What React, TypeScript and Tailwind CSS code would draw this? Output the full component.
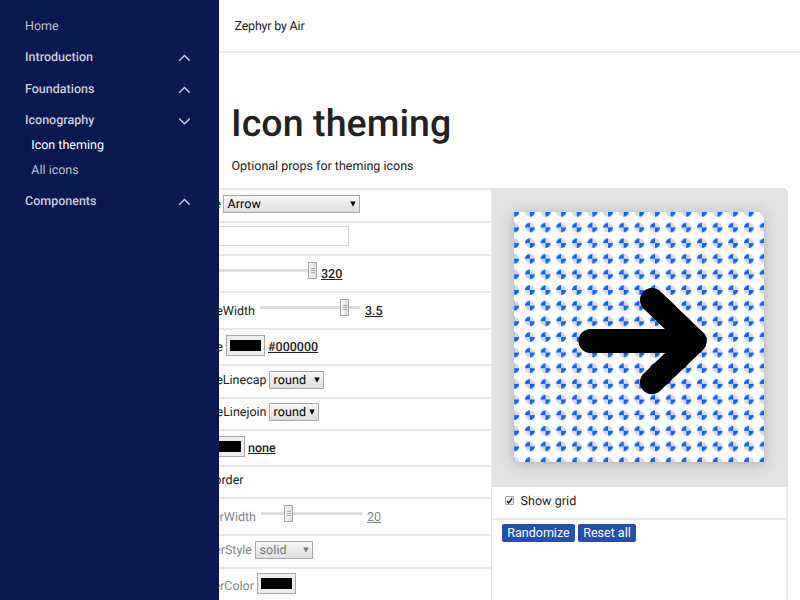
import React from 'react';

const CARET_UP = 'M1.2 7.8 L6.5 2.6 L11.8 7.8';
const CARET_DOWN = 'M1.2 2.6 L6.5 7.8 L11.8 2.6';

function Chevron({ open = false }: { open?: boolean }) {
  return (
    <svg width="13" height="10" viewBox="0 0 13 10" fill="none" stroke="#d2d3d8" strokeWidth="1.4">
      <path d={open ? CARET_DOWN : CARET_UP} />
    </svg>
  );
}

function Group({ label, open }: { label: string; open?: boolean }) {
  return (
    <div className="flex h-[31.25px] items-center justify-between pr-[28px] pl-[25px] font-medium text-[#c9cbd2]">
      <span>{label}</span>
      <Chevron open={open} />
    </div>
  );
}

function Row({ height, children, className = '' }: { height: string; children: React.ReactNode; className?: string }) {
  return (
    <div className={`flex shrink-0 items-center border-b-2 border-[#e8e8e8] ${height} ${className}`}>{children}</div>
  );
}

function Label({ width, children, className = '' }: { width: string; children?: React.ReactNode; className?: string }) {
  return (
    <div className={`flex shrink-0 justify-end overflow-hidden pt-[2px] ${width} ${className}`}>
      <span className="whitespace-nowrap">{children}</span>
    </div>
  );
}

function Select({ width, children, muted = false }: { width: string; children: string; muted?: boolean }) {
  return (
    <div
      className={`flex h-[18px] shrink-0 items-center justify-between border border-[#a9a9ab] bg-linear-to-b from-[#f6f6f6] to-[#dedede] pr-[3px] pl-[3.5px] ${width} ${muted ? 'text-[#777777]' : 'text-black'}`}
    >
      <span className="pt-[2px] tracking-[0.1px]">{children}</span>
      <svg width="6" height="6" viewBox="0 0 6 6" fill="currentColor">
        <path d="M0.3 0.5 H5.7 L3 5.8 Z" />
      </svg>
    </div>
  );
}

function Thumb() {
  return (
    <div className="flex h-[17px] w-[9px] shrink-0 flex-col items-center justify-center gap-px border border-[#a5a5a8] bg-linear-to-r from-[#fafafa] to-[#dddddd]">
      <i className="h-px w-[4px] bg-[#a8a8a8]" />
      <i className="h-px w-[4px] bg-[#a8a8a8]" />
      <i className="h-px w-[4px] bg-[#a8a8a8]" />
    </div>
  );
}

function Slider({ before, after }: { before: string; after: string }) {
  return (
    <div className="flex shrink-0 items-center">
      <div className={`h-[3px] bg-[#dddddd] ${before}`} />
      <Thumb />
      <div className={`h-[3px] bg-[#dddddd] ${after}`} />
    </div>
  );
}

function Swatch() {
  return (
    <div className="flex h-[21px] w-[39px] shrink-0 justify-end border border-[#a9a9ab] bg-[#eeeeee] px-[3px] py-[4px]">
      <div className="h-[11px] w-[31px] bg-black" />
    </div>
  );
}

function Value({ children, className = '' }: { children: string; className?: string }) {
  return <span className={`pt-[2px] underline underline-offset-1 ${className}`}>{children}</span>;
}

function Preview() {
  return (
    <svg width="250" height="250" viewBox="0 0 250 250">
      <defs>
        <pattern id="dots" width="15.64" height="15.64" patternUnits="userSpaceOnUse" x="-7.6" y="-8">
          <circle cx="7.82" cy="7.82" r="5" fill="#dadada" />
          <path d="M7.82 7.82 V2.82 A5 5 0 0 0 2.82 7.82 Z M7.82 7.82 V12.82 A5 5 0 0 0 12.82 7.82 Z" fill="#0866ff" />
        </pattern>
      </defs>
      <rect width="250" height="250" fill="#ffffff" />
      <rect width="250" height="250" fill="url(#dots)" />
      <path
        d="M76.5 129.1 H180.8 M138 88 L180.8 129.1 L138 170.2"
        fill="none"
        stroke="#000000"
        strokeWidth="24"
        strokeLinecap="round"
        strokeLinejoin="round"
      />
    </svg>
  );
}

export default function App() {
  return (
    <div className="flex h-[600px] w-[800px] overflow-hidden bg-white font-['Roboto',sans-serif] text-[12.5px] leading-[18px] text-[#222222] [text-rendering:geometricPrecision]">
      <nav className="flex w-[219px] shrink-0 flex-col bg-[#0a1850] pt-[11.4px]">
        <div className="flex h-[31.25px] items-center pl-[25px] text-[#bdbfc8]">Home</div>
        <Group label="Introduction" />
        <Group label="Foundations" />
        <Group label="Iconography" open />
        <div className="flex h-[19px] items-center pl-[31.3px] text-white">Icon theming</div>
        <div className="mt-[6px] mb-[6px] flex h-[19px] items-center pl-[31.3px] text-[#bdbfc8]">All icons</div>
        <Group label="Components" />
      </nav>

      <main className="flex min-w-0 flex-1 flex-col">
        <header className="flex h-[53px] shrink-0 items-center border-b-2 border-[#eaeaea] pt-[2px] pl-[15.5px] tracking-[-0.2px]">
          Zephyr by Air
        </header>
        <h1 className="mt-[46px] ml-[12px] h-[50px] text-[37.5px] leading-[50px] font-medium tracking-[0.08px]">Icon theming</h1>
        <p className="mt-[9px] ml-[12.5px] h-[18px]">Optional props for theming icons</p>

        <div className="mt-[12px] flex h-[412px] shrink-0">
          <section className="flex w-[272px] shrink-0 flex-col border-t-2 border-[#e8e8e8]">
            <Row height="h-[33px]" className="pb-[4px]">
              <Label width="w-[2px]">e</Label>
              <div className="w-[2px]" />
              <Select width="w-[137px]">Arrow</Select>
            </Row>
            <Row height="h-[33px]" className="pb-[6px]">
              <div className="h-[20px] w-[130px] border border-l-0 border-[#d3d3d3] bg-white" />
            </Row>
            <Row height="h-[37px]" className="pb-[6px]">
              <Slider before="w-[89px]" after="w-0" />
              <Value className="mt-[6px] ml-[4px] font-medium">320</Value>
            </Row>
            <Row height="h-[37px]">
              <Label width="w-[36px]" className="mt-px">eWidth</Label>
              <div className="mb-[7px] ml-[5px]">
                <Slider before="w-[80px]" after="w-[11px]" />
              </div>
              <Value className="ml-[5px] font-medium">3.5</Value>
            </Row>
            <Row height="h-[36px]">
              <Label width="w-[4px]">e</Label>
              <div className="mb-[3px] ml-[3px] flex">
                <Swatch />
              </div>
              <Value className="ml-[3px] font-medium">#000000</Value>
            </Row>
            <Row height="h-[33px]" className="pb-[4px]">
              <Label width="w-[47.5px]">eLinecap</Label>
              <div className="w-[2.5px]" />
              <Select width="w-[55px]">round</Select>
            </Row>
            <Row height="h-[32px]" className="pb-[4px]">
              <Label width="w-[47.5px]">eLinejoin</Label>
              <div className="w-[2.5px]" />
              <Select width="w-[50px]">round</Select>
            </Row>
            <Row height="h-[36px]">
              <div className="mb-[4px] flex w-[26px] justify-end overflow-hidden">
                <Swatch />
              </div>
              <Value className="ml-[3px] font-medium">none</Value>
            </Row>
            <Row height="h-[32px]" className="pb-[4px]">
              <Label width="w-[24.5px]">order</Label>
            </Row>
            <Row height="h-[37px]" className="text-[#858588]">
              <Label width="w-[37px]" className="mt-px">erWidth</Label>
              <div className="mb-[7px] ml-[5px]">
                <Slider before="w-[23px]" after="w-[69px]" />
              </div>
              <Value className="ml-[5px]">20</Value>
            </Row>
            <Row height="h-[33px]" className="pb-[4px] text-[#858588]">
              <Label width="w-[33px]">erStyle</Label>
              <div className="w-[3px]" />
              <Select width="w-[58px]" muted>solid</Select>
            </Row>
            <Row height="h-[36px]" className="text-[#858588]">
              <Label width="w-[35px]">erColor</Label>
              <div className="mb-[5px] ml-[3px] flex">
                <Swatch />
              </div>
            </Row>
          </section>

          <section className="flex w-[297px] shrink-0 flex-col rounded-tr-[5px] border-r-2 border-l border-[#e8e8e8]">
            <div className="flex h-[299px] w-[296px] shrink-0 rounded-tr-[5px] bg-[#e3e3e3] pt-[24px] pl-[22px]">
              <div className="h-[250px] w-[250px] shadow-[0_2px_12px_rgba(40,50,70,0.3)]">
                <Preview />
              </div>
            </div>
            <div className="flex h-[33px] shrink-0 items-center border-b-2 border-[#e8e8e8] bg-white pb-[4px] pl-[13px]">
              <span className="flex h-[9px] w-[9px] items-center justify-center rounded-[1px] border border-[#a9a9a9] bg-[#e9e9e9]">
                <svg width="8" height="8" viewBox="0 0 8 8" fill="none" stroke="#222222" strokeWidth="1.7">
                  <path d="M1 4.2 L3 6.2 L7 1.2" />
                </svg>
              </span>
              <span className="ml-[6.5px] pt-[2px] tracking-[0.06px]">Show grid</span>
            </div>
            <div className="mt-[4px] ml-[10px] flex gap-[3px] text-white">
              <button className="h-[18px] w-[73px] rounded-[2px] bg-[#234fae]">Randomize</button>
              <button className="h-[18px] w-[58px] rounded-[2px] bg-[#234fae]">Reset all</button>
            </div>
          </section>
        </div>
      </main>
    </div>
  );
}
